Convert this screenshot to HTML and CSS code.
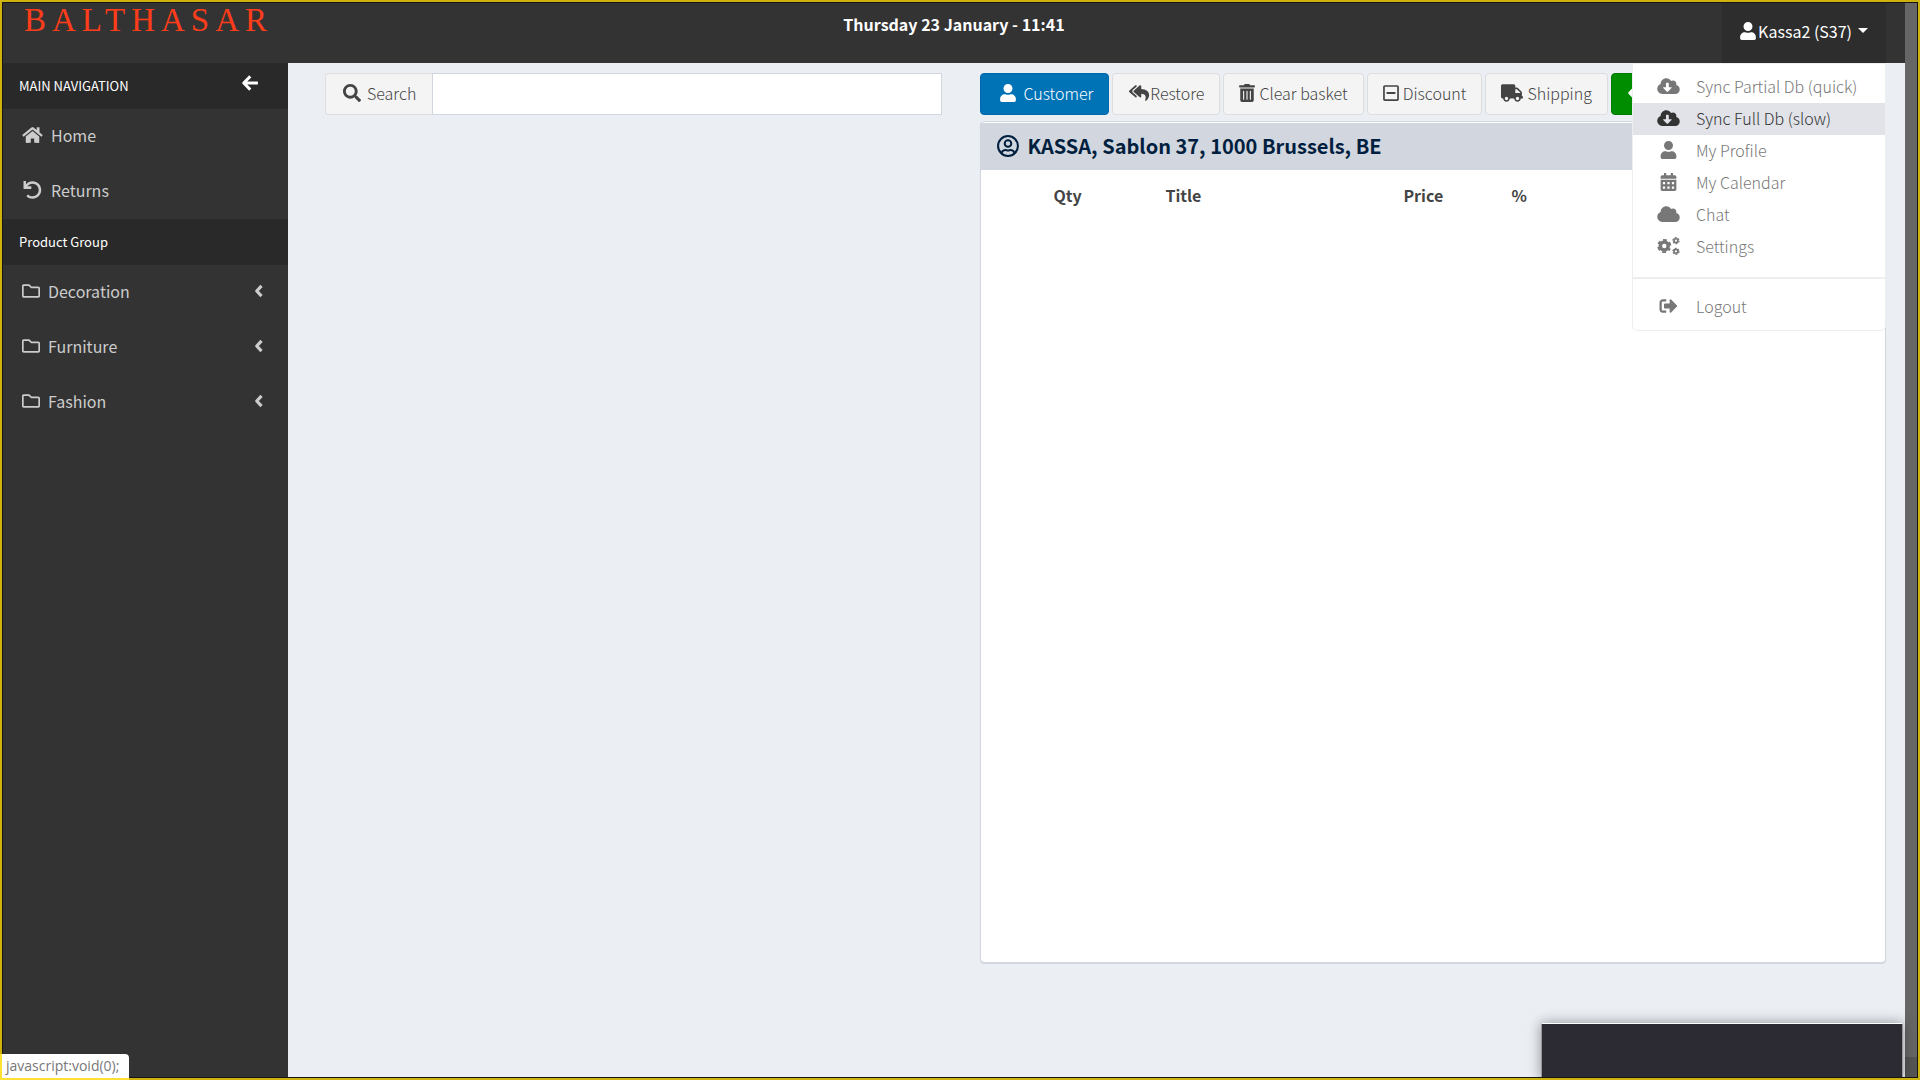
FILE: index.html
```html
<!DOCTYPE html>
<html lang="en">
<head>
<meta charset="utf-8">
<title>Balthasar</title>
<link rel="stylesheet" href="styles.css">
</head>
<body>
<svg class="sprite" aria-hidden="true">
  <symbol id="user" viewBox="0 0 448 512"><path d="M224 256c70.700 0 128-57.300 128-128S294.700 0 224 0 96 57.300 96 128s57.300 128 128 128zm89.600 32h-16.700c-22.200 10.200-46.900 16-72.900 16s-50.600-5.800-72.900-16h-16.700C60.200 288 0 348.200 0 422.400V464c0 26.500 21.500 48 48 48h352c26.500 0 48-21.500 48-48v-41.600c0-74.200-60.200-134.400-134.400-134.400z"/></symbol>
  <symbol id="cloud-down" viewBox="0 0 640 512"><path d="M537.600 226.600c4.100-10.700 6.400-22.400 6.400-34.600 0-53-43-96-96-96-19.700 0-38.100 6-53.300 16.200C367 64.200 315.300 32 256 32c-88.400 0-160 71.600-160 160 0 2.700.1 5.400.2 8.100C40.200 219.800 0 273.200 0 336c0 79.500 64.500 144 144 144h368c70.700 0 128-57.300 128-128 0-61.900-44-113.600-102.400-125.400zm-132.900 88.700L299.300 420.700c-6.200 6.200-16.400 6.200-22.600 0L171.300 315.300c-10.100-10.100-2.900-27.300 11.300-27.300H248V176c0-8.800 7.200-16 16-16h48c8.800 0 16 7.200 16 16v112h65.400c14.200 0 21.400 17.200 11.300 27.300z"/></symbol>
  <symbol id="cloud" viewBox="0 0 640 512"><path d="M537.600 226.600c4.100-10.700 6.400-22.400 6.400-34.600 0-53-43-96-96-96-19.700 0-38.100 6-53.300 16.200C367 64.200 315.300 32 256 32c-88.400 0-160 71.600-160 160 0 2.700.1 5.400.2 8.100C40.200 219.800 0 273.200 0 336c0 79.500 64.500 144 144 144h368c70.700 0 128-57.300 128-128 0-61.900-44-113.600-102.400-125.400z"/></symbol>
  <symbol id="home" viewBox="0 0 576 512"><path d="M280.370 148.260L96 300.110V464a16 16 0 0 0 16 16l112.060-.29a16 16 0 0 0 15.920-16V368a16 16 0 0 1 16-16h64a16 16 0 0 1 16 16v95.640a16 16 0 0 0 16 16.050L464 480a16 16 0 0 0 16-16V300L295.670 148.260a12.190 12.190 0 0 0-15.300 0zM571.600 251.470L488 182.560V44.050a12 12 0 0 0-12-12h-56a12 12 0 0 0-12 12v72.610L318.470 43a48 48 0 0 0-61 0L4.340 251.470a12 12 0 0 0-1.600 16.900l25.500 31A12 12 0 0 0 45.150 301l235.220-193.740a12.190 12.190 0 0 1 15.300 0L530.900 301a12 12 0 0 0 16.900-1.600l25.500-31a12 12 0 0 0-1.700-16.930z"/></symbol>
  <symbol id="undo" viewBox="0 0 512 512"><path d="M212.333 224.333H12c-6.627 0-12-5.373-12-12V12C0 5.373 5.373 0 12 0h48c6.627 0 12 5.373 12 12v78.112C117.773 39.279 184.260 7.470 258.175 8.007c136.906.994 246.448 111.623 246.157 248.532C504.041 393.258 393.120 504 256.333 504c-64.089 0-122.496-24.313-166.510-64.215-5.099-4.622-5.334-12.554-.467-17.420l33.967-33.967c4.474-4.474 11.662-4.717 16.401-.525C170.760 415.336 211.580 432 256.333 432c97.268 0 176-78.716 176-176 0-97.267-78.716-176-176-176-58.496 0-110.280 28.476-142.274 72.333h98.274c6.627 0 12 5.373 12 12v48c0 6.627-5.373 12-12 12z"/></symbol>
  <symbol id="folder" viewBox="0 0 512 512"><path d="M464 128H272l-54.630-54.630c-6-6-14.140-9.370-22.630-9.370H48C21.490 64 0 85.490 0 112v288c0 26.510 21.490 48 48 48h416c26.510 0 48-21.490 48-48V176c0-26.510-21.490-48-48-48zm0 272H48V112h140.120l54.630 54.630c6 6 14.140 9.370 22.630 9.370H464v224z"/></symbol>
  <symbol id="angle-left" viewBox="0 0 256 512"><path d="M200 112L64 256l136 144" fill="none" stroke="currentColor" stroke-width="92" stroke-linejoin="round"/></symbol>
  <symbol id="arrow-left" viewBox="0 0 448 512"><path d="M232 68L46 256l186 188M60 256h388" fill="none" stroke="currentColor" stroke-width="84" stroke-linejoin="round"/></symbol>
  <symbol id="search" viewBox="0 0 512 512"><path d="M505 442.700L405.300 343c-4.500-4.500-10.600-7-17-7H372c27.600-35.300 44-79.700 44-128C416 93.100 322.900 0 208 0S0 93.100 0 208s93.100 208 208 208c48.300 0 92.700-16.400 128-44v16.300c0 6.400 2.500 12.500 7 17l99.700 99.700c9.400 9.400 24.600 9.400 33.900 0l28.300-28.300c9.400-9.400 9.400-24.600.1-34zM208 336c-70.700 0-128-57.200-128-128 0-70.700 57.200-128 128-128 70.700 0 128 57.200 128 128 0 70.700-57.200 128-128 128z"/></symbol>
  <symbol id="reply-all" viewBox="0 0 576 512"><path d="M136.309 189.836L312.313 37.851C327.720 24.546 352 35.348 352 56.015v82.763c129.182 10.231 224 52.212 224 183.548 0 61.441-39.582 122.309-83.333 154.132-13.653 9.931-33.111-2.533-28.077-18.631 38.512-123.162-3.922-169.482-112.590-182.015v84.175c0 20.701-24.300 31.453-39.687 18.164L136.309 226.164c-11.071-9.561-11.086-26.753 0-36.328zm-128 36.328L184.313 378.150C199.700 391.439 224 380.687 224 359.986v-15.818l-108.606-93.785A55.960 55.960 0 0 1 96 207.998a55.953 55.953 0 0 1 19.393-42.380L224 71.832V56.015c0-20.667-24.280-31.469-39.687-18.164L8.309 189.836c-11.086 9.575-11.071 26.767 0 36.328z"/></symbol>
  <symbol id="trash" viewBox="0 0 448 512"><path d="M32 464a48 48 0 0 0 48 48h288a48 48 0 0 0 48-48V128H32zm272-256a16 16 0 0 1 32 0v224a16 16 0 0 1-32 0zm-96 0a16 16 0 0 1 32 0v224a16 16 0 0 1-32 0zm-96 0a16 16 0 0 1 32 0v224a16 16 0 0 1-32 0zM432 32H312l-9.400-18.700A24 24 0 0 0 281.100 0H166.800a23.720 23.720 0 0 0-21.400 13.300L136 32H16A16 16 0 0 0 0 48v32a16 16 0 0 0 16 16h416a16 16 0 0 0 16-16V48a16 16 0 0 0-16-16z"/></symbol>
  <symbol id="minus-square" viewBox="0 0 448 512"><path d="M108 284c-6.600 0-12-5.400-12-12v-32c0-6.600 5.400-12 12-12h232c6.600 0 12 5.400 12 12v32c0 6.600-5.400 12-12 12H108zM448 80v352c0 26.500-21.500 48-48 48H48c-26.500 0-48-21.500-48-48V80c0-26.500 21.500-48 48-48h352c26.500 0 48 21.500 48 48zm-48 346V86c0-3.300-2.700-6-6-6H54c-3.300 0-6 2.700-6 6v340c0 3.300 2.700 6 6 6h340c3.300 0 6-2.700 6-6z"/></symbol>
  <symbol id="truck" viewBox="0 0 640 512"><path d="M624 352h-16V243.900c0-12.700-5.100-24.900-14.100-33.900L494 110.100c-9-9-21.200-14.100-33.900-14.100H416V48c0-26.500-21.500-48-48-48H48C21.500 0 0 21.500 0 48v320c0 26.500 21.500 48 48 48h16c0 53 43 96 96 96s96-43 96-96h128c0 53 43 96 96 96s96-43 96-96h48c8.800 0 16-7.200 16-16v-32c0-8.800-7.200-16-16-16zM160 464c-26.500 0-48-21.500-48-48s21.500-48 48-48 48 21.500 48 48-21.500 48-48 48zm320 0c-26.500 0-48-21.500-48-48s21.500-48 48-48 48 21.500 48 48-21.500 48-48 48zm80-208H416V144h44.100l99.900 99.900V256z"/></symbol>
  <symbol id="calendar" viewBox="0 0 448 512"><path fill-rule="evenodd" d="M0 464c0 26.500 21.500 48 48 48h352c26.500 0 48-21.500 48-48V192H0zM64 256h64v64H64zM192 256h64v64h-64zM320 256h64v64h-64zM64 384h64v64H64zM192 384h64v64h-64zM320 384h64v64h-64zM400 64h-48V12c0-7-5-12-12-12h-40c-7 0-12 5-12 12v52H160V12c0-7-5-12-12-12h-40c-7 0-12 5-12 12v52H48C21 64 0 85 0 112v48h448v-48c0-27-21-48-48-48z"/></symbol>
  <symbol id="cogs" viewBox="0 0 640 512"><g fill="none" stroke="currentColor"><circle cx="200" cy="256" r="112" stroke-width="100"/><circle cx="200" cy="256" r="175" stroke-width="54" stroke-dasharray="104 79.300" stroke-dashoffset="52" transform="rotate(30 200 256)"/><circle cx="532" cy="104" r="54" stroke-width="48"/><circle cx="532" cy="104" r="86" stroke-width="36" stroke-dasharray="54 36"/><circle cx="532" cy="408" r="54" stroke-width="48"/><circle cx="532" cy="408" r="86" stroke-width="36" stroke-dasharray="54 36"/></g></symbol>
  <symbol id="sign-out" viewBox="0 0 512 512"><path d="M497 273L329 441c-15 15-41 4.500-41-17v-96H152c-13.300 0-24-10.700-24-24v-96c0-13.300 10.700-24 24-24h136V88c0-21.400 25.900-32 41-17l168 168c9.300 9.400 9.300 24.600 0 34zM192 436v-40c0-6.600-5.400-12-12-12H96c-17.700 0-32-14.300-32-32V160c0-17.700 14.300-32 32-32h84c6.600 0 12-5.400 12-12V76c0-6.600-5.400-12-12-12H96c-53 0-96 43-96 96v192c0 53 43 96 96 96h84c6.600 0 12-5.400 12-12z"/></symbol>
  <symbol id="user-circle" viewBox="0 0 496 512"><g fill="none" stroke="currentColor" stroke-width="46"><circle cx="248" cy="256" r="224"/><circle cx="248" cy="200" r="74"/><path d="M98 416c22-50 62-68 92-68 20 0 34 10 58 10s38-10 58-10c30 0 70 18 92 68"/></g></symbol>
</svg>

<div class="window">
  <div class="app">
    <header class="topbar">
      <a class="brand" href="#">BALTHASAR</a>
      <time class="clock">Thursday 23 January - 11:41</time>
      <div class="account">
        <button class="account-toggle" type="button"><svg class="icon icon-narrow"><use href="#user"/></svg>Kassa2 (S37)<span class="caret"></span></button>
        <nav class="menu" aria-label="Account">
          <a class="menu-item" href="#"><svg class="icon"><use href="#cloud-down"/></svg>Sync Partial Db (quick)</a>
          <a class="menu-item menu-item-active" href="#"><svg class="icon"><use href="#cloud-down"/></svg>Sync Full Db (slow)</a>
          <a class="menu-item" href="#"><svg class="icon"><use href="#user"/></svg>My Profile</a>
          <a class="menu-item" href="#"><svg class="icon"><use href="#calendar"/></svg>My Calendar</a>
          <a class="menu-item" href="#"><svg class="icon"><use href="#cloud"/></svg>Chat</a>
          <a class="menu-item" href="#"><svg class="icon"><use href="#cogs"/></svg>Settings</a>
          <hr class="menu-divider">
          <a class="menu-item" href="#"><svg class="icon"><use href="#sign-out"/></svg>Logout</a>
        </nav>
      </div>
    </header>

    <div class="body">
      <aside class="sidebar">
        <h2 class="side-title">MAIN NAVIGATION<button class="collapse" type="button" aria-label="Collapse"><svg class="icon icon-narrow"><use href="#arrow-left"/></svg></button></h2>
        <nav>
          <a class="side-link" href="#"><svg class="icon icon-side"><use href="#home"/></svg>Home</a>
          <a class="side-link" href="#"><svg class="icon icon-side"><use href="#undo"/></svg>Returns</a>
        </nav>
        <h2 class="side-title">Product Group</h2>
        <nav>
          <a class="side-link" href="#"><svg class="icon"><use href="#folder"/></svg>Decoration<svg class="icon side-angle"><use href="#angle-left"/></svg></a>
          <a class="side-link" href="#"><svg class="icon"><use href="#folder"/></svg>Furniture<svg class="icon side-angle"><use href="#angle-left"/></svg></a>
          <a class="side-link" href="#"><svg class="icon"><use href="#folder"/></svg>Fashion<svg class="icon side-angle"><use href="#angle-left"/></svg></a>
        </nav>
      </aside>

      <main class="content">
        <form class="search">
          <button class="btn search-btn" type="button"><svg class="icon"><use href="#search"/></svg>Search</button>
          <input class="search-input" type="text" aria-label="Search">
        </form>
        <section class="basket">
          <div class="toolbar">
            <button class="btn btn-primary" type="button"><svg class="icon"><use href="#user"/></svg>Customer</button>
            <button class="btn btn-tight" type="button"><svg class="icon icon-wide"><use href="#reply-all"/></svg>Restore</button>
            <button class="btn" type="button"><svg class="icon icon-narrow"><use href="#trash"/></svg>Clear basket</button>
            <button class="btn" type="button"><svg class="icon icon-narrow"><use href="#minus-square"/></svg>Discount</button>
            <button class="btn" type="button"><svg class="icon icon-wide"><use href="#truck"/></svg>Shipping</button>
            <button class="btn btn-success" type="button" aria-label="Pay"><svg class="icon"><use href="#arrow-left"/></svg></button>
          </div>
          <div class="panel">
            <h1 class="customer"><svg class="icon icon-large"><use href="#user-circle"/></svg>KASSA, Sablon 37, 1000 Brussels, BE</h1>
            <table class="lines">
              <thead>
                <tr><th class="col-qty">Qty</th><th class="col-title">Title</th><th class="col-price">Price</th><th class="col-pct">%</th></tr>
              </thead>
            </table>
          </div>
        </section>
      </main>
    </div>
  </div>
  <div class="scroll-track"><div class="scroll-thumb"></div></div>
</div>

<div class="toast"></div>
<div class="frame"></div>
<div class="status">javascript:void(0);</div>
</body>
</html>
```
FILE: styles.css
```css
* {
  box-sizing: border-box;
}

body {
  margin: 0;
  font-family: "Noto Sans CJK SC", "Open Sans", sans-serif;
  font-size: 16px;
  line-height: 24px;
  color: #444;
  background: #ebeff4;
}

a {
  color: inherit;
  text-decoration: none;
}

button {
  font: inherit;
  color: inherit;
  cursor: pointer;
}

.sprite {
  position: absolute;
  width: 0;
  height: 0;
}

.icon {
  flex: none;
  width: 18px;
  height: 18px;
  fill: currentColor;
}

.icon-narrow {
  width: 16px;
}

.icon-wide {
  width: 22px;
}

.icon-side {
  width: 21px;
}

.icon-large {
  width: 22px;
  height: 24px;
}

.window {
  display: flex;
  min-height: 100vh;
  padding: 3px;
}

.app {
  flex: 1;
  display: flex;
  flex-direction: column;
  min-width: 0;
}

.scroll-track {
  display: flex;
  flex: none;
  width: 12px;
  padding-bottom: 20px;
  background: #555;
}

.scroll-thumb {
  flex: 1;
  background: #666;
}

/* Top bar */
.topbar {
  display: grid;
  grid-template-columns: 1fr auto 1fr;
  height: 60px;
  color: #fff;
  background: #333;
}

.brand {
  padding-left: 21px;
  font-family: "Liberation Serif", serif;
  font-size: 33px;
  line-height: 34px;
  letter-spacing: 6px;
  color: #ff3d1a;
}

.clock {
  padding-top: 9px;
  font-size: 16px;
  font-weight: 700;
}

.account {
  position: relative;
  justify-self: end;
  margin-right: 19px;
}

.account-toggle {
  display: flex;
  align-items: center;
  gap: 2px;
  height: 60px;
  padding: 0 18px 5px;
  border: 0;
  background: #2d2d2d;
}

.caret {
  margin-left: 4px;
  border: 5px solid transparent;
  border-top-color: #fff;
  border-bottom-width: 0;
}

.menu {
  position: absolute;
  z-index: 2;
  top: 60px;
  right: 0;
  width: 254px;
  padding: 7px 0;
  border: 1px solid #eee;
  border-radius: 0 0 5px 5px;
  background: #fff;
}

.menu-item {
  display: flex;
  align-items: center;
  gap: 16px;
  height: 32px;
  padding: 0 24px 2px;
  font-weight: 300;
  color: #777;
}

.menu-item .icon {
  width: 23px;
}

.menu-item-active {
  color: #333;
  background: #e1e3e9;
}

.menu-divider {
  height: 2px;
  margin: 14px 0 12px;
  border: 0;
  background: #eee;
}

/* Sidebar */
.body {
  flex: 1;
  display: flex;
}

.sidebar {
  flex: none;
  width: 285px;
  color: #ccc;
  background: #333;
}

.side-title {
  display: flex;
  align-items: center;
  justify-content: space-between;
  height: 46px;
  margin: 0;
  padding: 0 28px 0 16px;
  font-size: 13px;
  font-weight: 400;
  color: #fff;
  background: #292929;
}

.collapse {
  display: flex;
  padding: 0 2px 6px;
  border: 0;
  background: none;
}

.side-link {
  display: flex;
  align-items: center;
  gap: 8px;
  height: 55px;
  padding: 0 24px 3px 19px;
}

.side-angle {
  width: 10px;
  margin-left: auto;
}

/* Content */
.content {
  flex: 1;
  display: grid;
  grid-template-columns: 15fr 22fr;
  gap: 38px;
  align-items: start;
  min-width: 0;
  padding: 10px 19px 0 37px;
}

.btn {
  flex: none;
  display: flex;
  align-items: center;
  gap: 4px;
  height: 42px;
  padding: 0 15px 3px;
  border: 1px solid #ddd;
  border-radius: 4px;
  font-weight: 300;
  background: #f4f4f4;
}

.btn-tight {
  gap: 0;
}

.btn-primary {
  gap: 6px;
  padding: 0 15px 3px 18px;
  border-color: #0069aa;
  color: #fff;
  background: #0073b7;
}

.btn-success {
  border-color: #007a00;
  color: #fff;
  background: #008d00;
}

.search {
  display: flex;
}

.search-btn {
  gap: 6px;
  padding: 0 16px 3px 17px;
  border-right: 0;
  border-radius: 4px 0 0 4px;
}

.search-input {
  flex: 1;
  min-width: 0;
  padding: 0 12px;
  border: 1px solid #d2d6de;
  font: inherit;
  background: #fff;
}

.basket {
  min-width: 0;
}

.toolbar {
  display: flex;
  gap: 3px;
}

.panel {
  height: calc(100vh - 238px);
  min-height: 300px;
  margin-top: 6px;
  padding-top: 1px;
  border: 1px solid #d2d6de;
  border-radius: 4px;
  background: #fff;
  box-shadow: 0 1px 1px rgba(0, 0, 0, 0.1);
}

.customer {
  display: flex;
  align-items: center;
  gap: 8px;
  height: 47px;
  margin: 0;
  padding: 0 16px 2px;
  font-size: 20px;
  font-weight: 700;
  color: #001f3f;
  background: #d2d6de;
}

.lines {
  width: 100%;
  border-collapse: collapse;
  table-layout: fixed;
}

.lines th {
  padding: 13px 0;
  font-weight: 700;
  text-align: left;
}

.lines .col-qty {
  width: 184px;
  padding-left: 72px;
}

.col-title {
  width: 238px;
}

.col-price {
  width: 108px;
}

/* Overlays */
.toast {
  position: fixed;
  right: 17px;
  bottom: 0;
  width: 362px;
  height: 57px;
  border: 1px solid #999;
  border-top-color: #fff;
  border-bottom: 0;
  background: #2c2b33;
  box-shadow: 0 0 12px rgba(0, 0, 0, 0.4);
}

.frame {
  position: fixed;
  z-index: 3;
  inset: 0;
  border: 2px solid #ceb30f;
  box-shadow: inset 0 0 0 1px #151515;
  pointer-events: none;
}

.status {
  position: fixed;
  z-index: 4;
  left: 0;
  bottom: 0;
  padding: 0 10px 0 4px;
  border: solid #ffe033;
  border-width: 0 0 2px 2px;
  border-radius: 0 4px 0 0;
  font-family: "Open Sans", sans-serif;
  font-size: 14px;
  color: #777;
  background: #fff;
}
```
